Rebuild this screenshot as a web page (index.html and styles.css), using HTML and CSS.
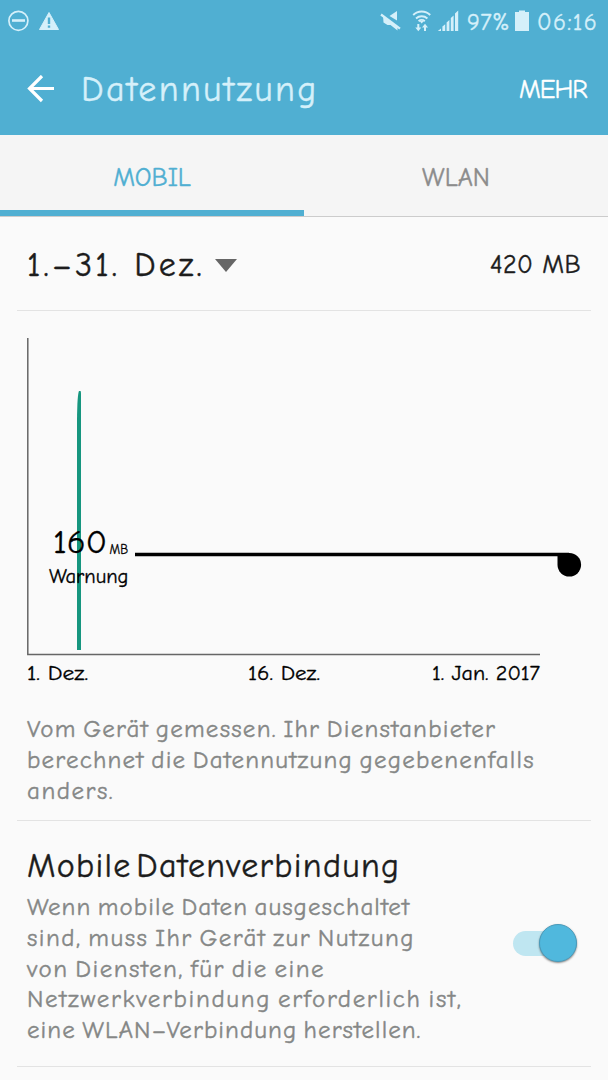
FILE: index.html
```
<!DOCTYPE html>
<html lang="de">
    <head>
        <meta charset="utf-8">
        <title>Datennutzung</title>
        <link rel="stylesheet" href="styles.css">
    </head>
    <body>
        <header class="top">
            <div class="statusbar">
                <svg class="notifications" width="56" height="42" viewBox="0 0 56 42">
                    <circle cx="10.400" cy="20.8" r="9.5" fill="none" stroke="currentColor" stroke-width="1.7"/>
                    <path d="M4 20.500h13" stroke="currentColor" stroke-width="2.6"/>
                    <path d="M41 12.500L50.500 29.500H31.500z" fill="currentColor" stroke="currentColor" stroke-width="1" stroke-linejoin="round"/>
                    <path d="M41 17.500v6.500M41 25.500v2.200" stroke="#50afd2" stroke-width="2.400"/>
                </svg>
                <svg class="signals" width="82" height="42" viewBox="378 0 82 42">
                    <g fill="currentColor">
                        <path d="M389.500 16L397 11v9.500z"/>
                        <path d="M383 15.500l14.500 12v3l-7-5.500h-3l-4-2.500z"/>
                        <path d="M417.300 24h2v3.500h2l-3 3.700-3-3.700h2zM424 31h2v-3.500h2l-3-3.700-3 3.700h2z"/>
                        <path d="M419.600 21l2.100 2.600 2.100-2.600z"/>
                        <path d="M437.800 31l3.200-2.500V31zM442.400 31v-4.500l2.800-2.300V31zM446.600 31v-8.500l2.800-2.500v11zM450.800 31V18l2.800-2.500V31zM455 31V13.500l3.200-3V31z"/>
                    </g>
                    <path d="M381 14.500l19 14.200" stroke="currentColor" stroke-width="2.200"/>
                    <path d="M413.200 15a12 12 0 0 1 17 0M416 18.500a8.500 8.500 0 0 1 11.400 0M418.600 21.200a4.600 4.600 0 0 1 6.200 0" fill="none" stroke="currentColor" stroke-width="1.900"/>
                </svg>
                <span class="percent">97%</span>
                <svg class="battery" width="14" height="42" viewBox="0 0 14 42">
                    <path d="M0 12h4v-1.500h6V12h4v19H0z" fill="currentColor"/>
                </svg>
                <span class="clock">06:16</span>
            </div>
            <div class="titlebar">
                <svg class="back" width="28" height="28" viewBox="0 0 28 28">
                    <path d="M27 13.500H3M15 1L2.500 13.500 15 26" fill="none" stroke="currentColor" stroke-width="3.200"/>
                </svg>
                <h1>Datennutzung</h1>
                <span class="more">MEHR</span>
            </div>
        </header>
        <nav class="tabs">
            <div class="tab active"><span>MOBIL</span></div>
            <div class="tab"><span>WLAN</span></div>
        </nav>
        <main>
            <section class="cycle">
                <span class="range">1.–31. Dez.</span>
                <span class="arrow"></span>
                <span class="total">420 MB</span>
            </section>
            <section class="usage">
                <svg class="chart" width="574" height="389" viewBox="17 311 574 389">
                    <path d="M27.800 338v316.500H540" fill="none" stroke="#666" stroke-width="1.500"/>
                    <path d="M77 650V420q.3-26 2-29h1.500q.5 0 .5 3V650z" fill="#16967f"/>
                    <path d="M135 554.500H569" stroke="#000" stroke-width="3.400"/>
                    <path d="M557.500 553H569.500a11.800 11.800 0 1 1-12 12z"/>
                    <text x="53" y="553" font-size="33" textLength="54" lengthAdjust="spacingAndGlyphs">160</text>
                    <text x="109.500" y="554" font-size="14" textLength="18.500" lengthAdjust="spacingAndGlyphs">MB</text>
                    <text x="49" y="582.500" font-size="19.500" textLength="79.500" lengthAdjust="spacingAndGlyphs">Warnung</text>
                    <text x="27" y="680" font-size="19.500" textLength="61" lengthAdjust="spacingAndGlyphs">1. Dez.</text>
                    <text x="248" y="680" font-size="19.500" textLength="72" lengthAdjust="spacingAndGlyphs">16. Dez.</text>
                    <text x="432" y="680" font-size="19.500" textLength="108" lengthAdjust="spacingAndGlyphs">1. Jan. 2017</text>
                </svg>
                <p class="note">
                    <span class="n1">Vom Gerät gemessen. Ihr Dienstanbieter</span>
                    <span class="n2">berechnet die Datennutzung gegebenenfalls</span>
                    <span class="n3">anders.</span>
                </p>
            </section>
            <section class="mobile">
                <div class="text">
                    <h2>Mobile Datenverbindung</h2>
                    <p>
                        <span class="m1">Wenn mobile Daten ausgeschaltet</span>
                        <span class="m2">sind, muss Ihr Gerät zur Nutzung</span>
                        <span class="m3">von Diensten, für die eine</span>
                        <span class="m4">Netzwerkverbindung erforderlich ist,</span>
                        <span class="m5">eine WLAN–Verbindung herstellen.</span>
                    </p>
                </div>
                <div class="switch"><div class="knob"></div></div>
            </section>
        </main>
    </body>
</html>
```

FILE: styles.css
```
* {
    margin: 0;
    padding: 0;
    box-sizing: border-box;
}
:root {
    --blue: #50afd2;
    --pale: #d5f0fa;
    --text: #1c1c1c;
    --muted: #858786;
    --line: #e3e3e3;
}
body {
    width: 608px;
    height: 1080px;
    overflow: hidden;
    background-color: #fafafa;
    color: var(--text);
    font-family: "Comic Neue", Lato, "Open Sans", sans-serif;
    white-space: nowrap;
    -webkit-text-stroke: .4px currentColor;
}
h1, h2 {
    font-weight: normal;
}
.top {
    height: 135px;
    background-color: var(--blue);
    color: var(--pale);
}
.statusbar {
    display: flex;
    height: 42px;
    padding: 0 8px;
    font-size: 24px;
    line-height: 44px;
}
.signals {
    margin-left: auto;
}
.percent {
    width: 48px;
    margin-left: 7px;
    letter-spacing: .6px;
}
.clock {
    width: 63px;
    margin-left: 8px;
    letter-spacing: 1.3px;
}
.titlebar {
    display: flex;
    align-items: center;
    height: 93px;
    padding: 0 20px 0 27px;
}
.back {
    color: #fff;
}
h1 {
    margin-left: 26px;
    padding-top: 2px;
    font-size: 36px;
    line-height: 44px;
    letter-spacing: 2.3px;
}
.more {
    width: 69px;
    margin-left: auto;
    padding-top: 3px;
    color: #fff;
    font-size: 26px;
    letter-spacing: -1px;
}
.tabs {
    display: flex;
    height: 82px;
    background-color: #f5f5f5;
    border-bottom: 1px solid #ccc;
}
.tab {
    flex: 1;
    border-bottom: 6px solid transparent;
    color: #8c8c8c;
    font-size: 26px;
    line-height: 86px;
    text-align: center;
}
.tab.active {
    border-color: var(--blue);
    color: var(--blue);
}
main {
    padding: 0 17px;
}
.cycle {
    display: flex;
    align-items: center;
    height: 94px;
    padding: 3px 10px 0;
    border-bottom: 1px solid var(--line);
}
.range {
    width: 188px;
    font-size: 34px;
    letter-spacing: 3px;
}
.arrow {
    border: 11px solid transparent;
    border-top: 13px solid #666;
    border-bottom: 0;
}
.total {
    margin-left: auto;
    font-size: 26px;
    letter-spacing: .4px;
}
.usage {
    height: 510px;
    border-bottom: 1px solid var(--line);
}
.chart {
    display: block;
}
.chart text {
    fill: #000;
    stroke: #000;
    stroke-width: .3px;
}
p {
    color: var(--muted);
    font-size: 25px;
    line-height: 30.800px;
    word-spacing: -3px;
}
p span {
    display: block;
}
.note {
    padding: 14px 10px 0;
}
.n1 {
    letter-spacing: 1.25px;
}
.n2 {
    letter-spacing: 1.2px;
}
.n3 {
    letter-spacing: 1.5px;
}
.m1 {
    letter-spacing: 1.05px;
}
.m2 {
    letter-spacing: 1.45px;
}
.m3 {
    letter-spacing: 1.5px;
}
.m4 {
    letter-spacing: 1.65px;
}
.m5 {
    letter-spacing: 1.05px;
}
.mobile {
    display: flex;
    justify-content: space-between;
    height: 246px;
    padding: 26px 14px 0 10px;
    border-bottom: 1px solid var(--line);
}
h2 {
    height: 45px;
    font-size: 34px;
    line-height: 39px;
    letter-spacing: 1.3px;
    word-spacing: -8px;
}
.switch {
    width: 64px;
    height: 25px;
    margin-top: 84px;
    border-radius: 13px;
    background-color: #bfe6f1;
}
.knob {
    width: 38px;
    height: 38px;
    margin: -7px 0 0 26px;
    border: 1px solid #4a9bbb;
    border-radius: 50%;
    background-color: #50b8dd;
    box-shadow: 0 1px 2px rgba(0, 0, 0, .45);
}
```
